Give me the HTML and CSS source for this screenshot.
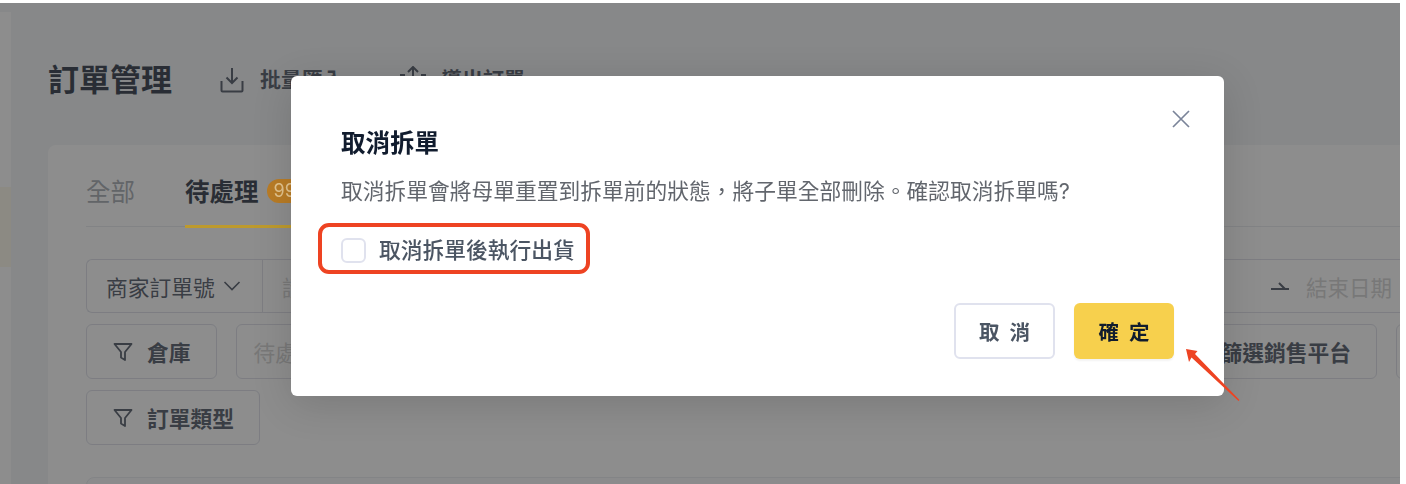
FILE: index.html
```html
<!DOCTYPE html>
<html lang="zh-Hant">
<head>
<meta charset="utf-8">
<title>訂單管理</title>
<link rel="stylesheet" href="styles.css">
</head>
<body>
<div class="frame">
  <div class="app">
    <aside class="sidebar"><div class="side-active"></div></aside>
    <main class="main">
      <header class="page-head">
        <h1 class="page-title">訂單管理</h1>
        <span class="head-action head-import">
          <svg class="head-icon" viewBox="0 0 24 26" fill="none"><path d="M12 1v15M6.500 10.500 12 16l5.500-5.500M1.500 14v9.500a1 1 0 0 0 1 1h19a1 1 0 0 0 1-1V14"/></svg>
          批量匯入
        </span>
        <span class="head-action head-export">
          <svg class="head-icon wide" viewBox="0 0 30 28" fill="none"><path d="M15 18V1M10 6l5-5 5 5M7 9H3v15h24V9h-4"/></svg>
          導出訂單
        </span>
      </header>
      <section class="card">
        <nav class="tabs">
          <span class="tab">全部</span>
          <span class="tab tab-on">待處理<span class="badge">99</span></span>
        </nav>
        <div class="filter-row search-row">
          <span class="search-select">商家訂單號
            <svg class="chevron" viewBox="0 0 18 10" fill="none"><path d="M1.500 1 9 8.500 16.500 1"/></svg>
          </span>
          <span class="search-input">請輸入商家訂單號</span>
          <span class="date-range">
            <svg class="range-arrow" viewBox="0 0 18 8" fill="none"><path d="M0 7h18M8 1l6 6"/></svg>
            <span class="date-end">結束日期</span>
          </span>
        </div>
        <div class="filter-row">
          <span class="filter-btn"><svg class="funnel" viewBox="0 0 20 20" fill="none"><path d="M1.500 2h17l-6.500 8v8l-4-2.500V10z"/></svg>倉庫</span>
          <span class="filter-input">待處理</span>
          <span class="filter-btn"><svg class="funnel" viewBox="0 0 20 20" fill="none"><path d="M1.500 2h17l-6.500 8v8l-4-2.500V10z"/></svg>篩選銷售平台</span>
          <span class="filter-btn last-btn"></span>
        </div>
        <div class="filter-row">
          <span class="filter-btn"><svg class="funnel" viewBox="0 0 20 20" fill="none"><path d="M1.500 2h17l-6.500 8v8l-4-2.500V10z"/></svg>訂單類型</span>
        </div>
        <div class="result-panel"></div>
      </section>
    </main>
  </div>
  <div class="mask"></div>
  <div class="modal" role="dialog">
    <svg class="modal-close" viewBox="0 0 18 18" fill="none"><path d="M1 1l16 16M17 1 1 17"/></svg>
    <h2 class="modal-title">取消拆單</h2>
    <p class="modal-text">取消拆單會將母單重置到拆單前的狀態&#xFF0C;將子單全部刪除。確認取消拆單嗎?</p>
    <label class="check-line"><span class="check-box"></span>取消拆單後執行出貨</label>
    <div class="modal-foot">
      <button class="btn btn-ghost">取消</button>
      <button class="btn btn-primary">確定</button>
    </div>
  </div>
  <div class="mark-box"></div>
  <svg class="mark-arrow" viewBox="0 0 60 60"><path d="M2 3 13.500 5 11 8 55.500 54 54.500 55 7.500 11.500 5 16z"/></svg>
</div>
</body>
</html>
```

FILE: styles.css
```css
* { box-sizing: border-box; }
html, body { margin: 0; height: 100%; background: #fff; overflow: hidden; }
body { padding-top: 3px; font-family: Inter, "Noto Sans CJK SC", sans-serif; }
.frame { position: relative; width: 1400px; height: 481px; overflow: hidden; }
.app { display: flex; width: 1460px; height: 100%; background: #f0f2f5; }
.sidebar { flex: none; width: 11px; margin-top: 9px; padding-top: 175px; background: #fff; }
.side-active { height: 80px; background: #fdf8e6; }
.main { flex: 1; padding-left: 37px; }
.page-head { display: flex; align-items: center; height: 142px; padding-top: 12px; color: #374151; }
.page-title { width: 172px; margin: 0; font-size: 31px; line-height: 40px; font-weight: 700; color: #111c2e; }
.head-action { display: flex; align-items: center; padding-bottom: 4px; font-size: 21px; font-weight: 600; color: #374151; }
.head-import { width: 178px; }
.head-icon { width: 24px; height: 26px; margin-top: 4px; margin-right: 16px; stroke: #374151; stroke-width: 2; }
.head-icon.wide { width: 30px; height: 28px; margin-right: 13px; }
.card { height: 400px; padding: 0 38px; border-radius: 8px 0 0 0; background: #fff; }
.tabs { display: flex; align-items: center; gap: 50px; height: 82px; border-bottom: 1px solid #e4e6eb; }
.tab { position: relative; display: flex; align-items: center; height: 82px; padding-top: 10px; font-size: 24.500px; color: #9aa0a8; }
.tab-on { font-weight: 700; color: #111c2e; }
.tab-on::after { content: ""; position: absolute; z-index: 1; left: 0; right: -160px; bottom: -1px; height: 3px; background: #bd9a2e; }
.badge { position: relative; z-index: 1; display: inline-flex; align-items: center; margin-left: 8px; padding: 0 12px 0 7px; height: 24px; border-radius: 12px; font-size: 18px; font-weight: 400; color: #e3c48e; background: #b97c26; }
.filter-row { display: flex; gap: 19px; height: 55px; margin-top: 11px; font-size: 21.750px; }
.search-row { height: 54px; margin-top: 32px; border: 1px solid #d8dae5; border-right: 0; border-radius: 6px 0 0 6px; }
.search-select { display: flex; align-items: center; gap: 8px; width: 176px; margin-right: -19px; padding-left: 19px; border-right: 1px solid #d8dae5; color: #374151; }
.chevron { width: 18px; height: 10px; stroke: #374151; stroke-width: 1.600; }
.search-input { display: flex; flex: 1; align-items: center; margin-left: 19px; color: #ccc; }
.date-range { display: flex; align-items: center; gap: 17px; padding-right: 30px; font-size: 21.500px; }
.range-arrow { width: 18px; height: 8px; stroke: #374151; stroke-width: 2; }
.date-end { color: #ccc; }
.filter-btn { display: flex; flex: none; align-items: center; gap: 14px; padding: 0 25px 0 26px; border: 1px solid #d8dae5; border-radius: 6px; font-weight: 600; color: #374151; }
.funnel { width: 20px; height: 20px; stroke: #374151; stroke-width: 1.800; stroke-linejoin: round; }
.filter-input { display: flex; flex: 1; align-items: center; padding-left: 17px; border: 1px solid #d8dae5; border-radius: 6px; color: #ccc; }
.filter-btn.last-btn { width: 26px; padding: 0; }
.result-panel { height: 60px; margin-top: 32px; border: 1px solid #e8eaef; border-radius: 8px; background: #fafbfc; }
.mask { position: absolute; inset: 0; background: rgba(58, 58, 58, .58); backdrop-filter: blur(.6px); }
.modal { position: absolute; z-index: 2; left: 291px; top: 73px; width: 933px; height: 320px; padding: 50px 50px 0; border-radius: 6px; background: #fff; box-shadow: 0 8px 40px rgba(0, 0, 0, .14); }
.modal-close { position: absolute; top: 34px; right: 34px; width: 18px; height: 18px; stroke: #7b8499; stroke-width: 1.700; }
.modal-title { margin: 0; font-size: 24.500px; line-height: 34px; font-weight: 700; color: #111c2e; }
.modal-text { margin: 14px 0 0; font-size: 21.750px; line-height: 34px; white-space: nowrap; color: #62666d; }
.check-line { display: flex; align-items: center; gap: 13px; margin-top: 25px; font-size: 21.750px; font-weight: 500; line-height: 34px; color: #4b5563; }
.check-box { width: 25px; height: 25px; border: 2px solid #e0e2ee; border-radius: 6px; background: #fff; }
.modal-foot { display: flex; justify-content: flex-end; gap: 19px; margin-top: 36px; }
.btn { width: 101px; height: 56px; padding: 0 0 0 10px; border-radius: 6px; font: 600 20.500px Inter, "Noto Sans CJK SC", sans-serif; letter-spacing: 10px; }
.btn-ghost { border: 2px solid #e0e2ee; background: #fff; color: #4b5563; }
.btn-primary { width: 100px; border: 0; background: #f7d04d; color: #111c2e; box-shadow: 0 2px 2px rgba(0, 0, 0, .05); }
.mark-box { position: absolute; z-index: 3; left: 318px; top: 220px; width: 272px; height: 51px; border: 4px solid #ee4322; border-radius: 11px; }
.mark-arrow { position: absolute; z-index: 3; left: 1184px; top: 343px; width: 60px; height: 60px; fill: #ee4322; }
```
